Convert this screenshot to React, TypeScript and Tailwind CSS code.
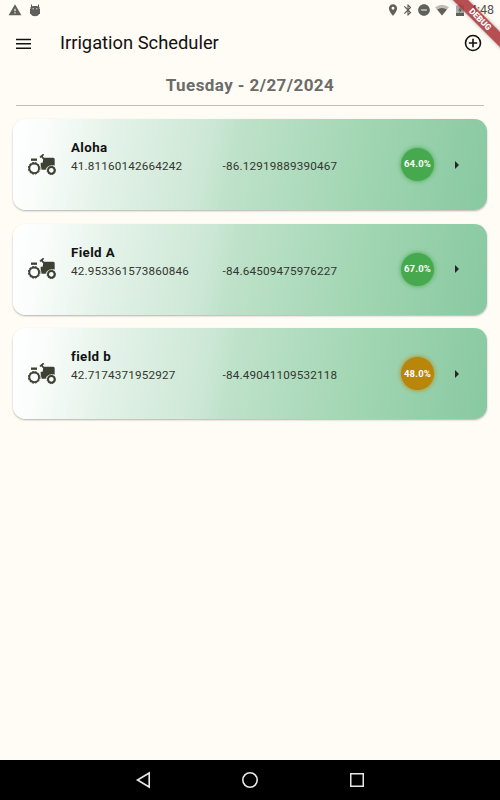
import { MdBluetooth, MdDoNotDisturbOn, MdLocationOn, MdWarning } from 'react-icons/md'

type Field = {
  name: string
  lat: string
  lng: string
  moisture: string
  low?: boolean
}

const fields: Field[] = [
  { name: 'Aloha', lat: '41.81160142664242', lng: '-86.12919889390467', moisture: '64.0%' },
  { name: 'Field A', lat: '42.953361573860846', lng: '-84.64509475976227', moisture: '67.0%' },
  { name: 'field b', lat: '42.7174371952927', lng: '-84.49041109532118', moisture: '48.0%', low: true },
]

function Tractor() {
  return (
    <svg viewBox="0 0 84 66" className="h-[22px] w-[28px] shrink-0" fill="#3c4134" stroke="#3c4134">
      <circle cx="18.500" cy="43" r="14.500" fill="none" strokeWidth="5.500" />
      <circle cx="18.500" cy="43" r="17.500" fill="none" strokeWidth="3" strokeDasharray="6 3.160" />
      <circle cx="70" cy="49" r="10" fill="none" strokeWidth="6" />
      <circle cx="70" cy="49" r="13" fill="none" strokeWidth="2.500" strokeDasharray="4 2.800" />
      <path d="M46 11h30q4 0 4 5v19c-12-4-24 1-27 12H41l-3-13V26h6z" stroke="none" />
      <path d="M9 17h18" strokeWidth="7" />
      <path d="M36 10L47 1M41 7l7 9" fill="none" strokeWidth="5" />
    </svg>
  )
}

function StatusBar() {
  return (
    <div className="flex h-5 items-center text-[#5f5f5b]">
      <MdWarning className="ml-2 size-[14px]" />
      <svg viewBox="0 0 12 13" className="ml-[7px] h-[13px] w-3" fill="currentColor">
        <path d="M2.500 .5v2.500M9.500 .5v2.500" stroke="currentColor" />
        <path d="M1.500 5V3.500Q2 2 4 2h4q2 0 2.500 1.500V5z" />
        <path d="M1 5h10v5h-.8q-1 2.300-4.200 2.300T1.800 10H1z" />
        <path d="M3.500 4.800h1.500M7 4.800h1.500" stroke="#fffcf5" strokeWidth=".8" />
      </svg>
      <MdLocationOn className="ml-[345px] size-[14px]" />
      <MdBluetooth className="ml-[1px] size-[14px]" />
      <MdDoNotDisturbOn className="ml-[2px] size-[14px]" />
      <svg viewBox="0 0 14 12" className="ml-[4px] h-3 w-[14px]" fill="currentColor">
        <path d="M0 3.300Q7-2 14 3.300L7 11.500z" opacity=".4" />
        <path d="M2.200 5.600q4.800-3.400 9.600 0L7 11.500z" />
      </svg>
      <svg viewBox="0 0 8 12" className="ml-[7px] h-3 w-2" fill="currentColor">
        <path d="M0 1.500h2.500V0h3v1.500H8V9H0z" opacity=".5" />
        <path d="M0 9h8v3H0z" />
        <path d="M5 2.500L2 6.500h1.800L3 9.500l3.200-4H4.300z" />
      </svg>
      <span className="ml-[6px] text-[12.500px] text-[#555552]">4:48</span>
    </div>
  )
}

function FieldCard({ field }: { field: Field }) {
  return (
    <div className="flex h-[91px] items-center rounded-[12.500px] bg-[linear-gradient(101deg,#ffffff_0%,#fafdfb_7%,#e3f2e8_21%,#cce7d5_41%,#bfe2ca_46%,#a2d6b3_72%,#88c9a0_100%)] pl-[15px] shadow-[0_1px_2px_rgba(0,0,0,0.3)]">
      <Tractor />
      <div className="-mt-[15px] ml-[15px] w-[330px]">
        <div className="text-[13.300px] leading-[19px] font-bold tracking-[0.400px] text-[#111]">{field.name}</div>
        <div className="flex text-[11.700px] leading-[19px] tracking-[0.180px] text-[#33362f]">
          <span className="w-[151.500px]">{field.lat}</span>
          <span>{field.lng}</span>
        </div>
      </div>
      <div
        className={`flex size-[33px] items-center justify-center rounded-full text-[9.500px] font-bold tracking-[0.200px] text-white ${
          field.low ? 'bg-[#b8860b] shadow-[0_0_5px_#b8860b]' : 'bg-[#47a94d] shadow-[0_0_5px_#47a94d]'
        }`}
      >
        {field.moisture}
      </div>
      <svg viewBox="0 0 4 8" className="ml-[21px] h-2 w-1" fill="#2b2226">
        <path d="M0 0l4 4-4 4z" />
      </svg>
    </div>
  )
}

export default function App() {
  return (
    <div className="relative flex h-[800px] w-[500px] flex-col overflow-hidden bg-[#fffcf5] font-['Roboto',sans-serif]">
      <StatusBar />

      {/* App bar */}
      <header className="flex h-[47px] items-center pl-4 text-[#111]">
        <svg viewBox="0 0 15 12" className="h-3 w-[15px]" fill="none" stroke="currentColor" strokeWidth="1.500">
          <path d="M0 1.500h15M0 5.800h15M0 10.200h15" />
        </svg>
        <h1 className="-mt-px ml-[29px] flex-1 text-[18.330px]">Irrigation Scheduler</h1>
        <svg viewBox="0 0 20 20" className="mr-[17px] -mt-px size-5" fill="none" stroke="currentColor" strokeWidth="1.600">
          <circle cx="10" cy="10" r="7.500" />
          <path d="M10 5.800v8.400M5.800 10h8.400" />
        </svg>
      </header>

      <main className="flex-1">
        <div className="mx-4 h-[39px] border-b border-[#bfc2bc] pt-[6px] text-center text-[17px] font-bold tracking-[0.420px] text-[#6b6c69]">
          Tuesday - 2/27/2024
        </div>
        <div className="mx-[13px] mt-[13px] flex flex-col gap-[13.600px]">
          {fields.map((field) => (
            <FieldCard key={field.name} field={field} />
          ))}
        </div>
      </main>

      {/* System navigation */}
      <nav className="flex h-10 items-center bg-black">
        <svg viewBox="0 0 16 18" className="ml-[135px] h-[18px] w-4" fill="none" stroke="#e8e8e8" strokeWidth="1.600">
          <path d="M14.200 2v14L2.500 9z" />
        </svg>
        <svg viewBox="0 0 18 18" className="ml-[90px] size-[18px]" fill="none" stroke="#e8e8e8" strokeWidth="1.600">
          <circle cx="9" cy="9" r="7.200" />
        </svg>
        <svg viewBox="0 0 14 14" className="ml-[91px] size-[14px]" fill="none" stroke="#e8e8e8" strokeWidth="1.500">
          <path d="M.75.75h12.500v12.500H.75z" />
        </svg>
      </nav>

      {/* Debug ribbon */}
      <div className="absolute top-[14px] -right-[40px] flex h-[11px] w-[120px] rotate-45 items-center justify-center bg-[#a92f35]/85 text-[8.500px] leading-none font-black text-white shadow-[0_0_4px_rgba(0,0,0,0.3)]">
        DEBUG
      </div>
    </div>
  )
}
